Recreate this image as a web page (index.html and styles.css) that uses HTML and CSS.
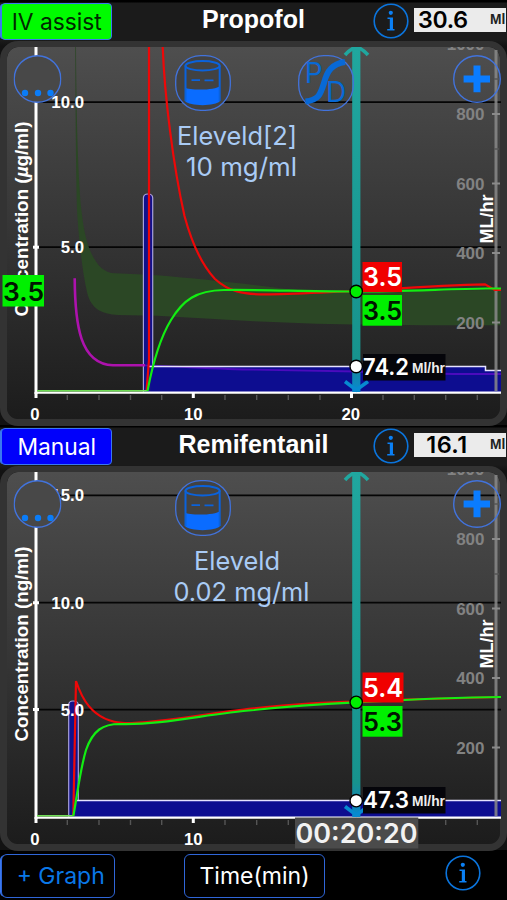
FILE: index.html
```html
<!DOCTYPE html>
<html lang="en">
<head>
    <meta charset="UTF-8">
    <meta name="viewport" content="width=device-width, initial-scale=1.0">
    <title>Infusion Graphs</title>
    <link rel="stylesheet" href="styles.css">
</head>
<body>
    <!-- shared icons and axes -->
    <svg class="defs" width="0" height="0">
        <defs>
            <linearGradient id="cursorFill" x1="0" y1="47" x2="0" y2="392" gradientUnits="userSpaceOnUse">
                <stop offset="0" stop-color="#20a79f"/>
                <stop offset="0.9" stop-color="#17938d"/>
                <stop offset="0.95" stop-color="#1287ac"/>
                <stop offset="1" stop-color="#078ad0"/>
            </linearGradient>
            <clipPath id="plotClip"><rect x="0" y="47" width="501" height="380"/></clipPath>
            <symbol id="info" viewBox="0 0 36 36">
                <circle cx="18" cy="18" r="16.8" fill="none" stroke="#0b74dc" stroke-width="1.6"/>
                <circle cx="17.8" cy="9.8" r="2.1" fill="#0b80f5"/>
                <path d="M14.5 15.2H19.2V26.3M14.2 26.8H21.5" fill="none" stroke="#0b80f5" stroke-width="1.5"/>
                <path d="M18.2 15V27" stroke="#0b80f5" stroke-width="2.8"/>
            </symbol>
            <symbol id="dots" viewBox="0 0 48 48">
                <circle cx="24" cy="24" r="23.3" fill="#484848" stroke="#4273dc" stroke-width="1.4"/>
                <g fill="#0a7cf8"><circle cx="11.5" cy="38" r="3.2"/><circle cx="24.5" cy="38" r="3.2"/><circle cx="37" cy="38" r="3.2"/></g>
            </symbol>
            <symbol id="plus" viewBox="0 0 48 48">
                <circle cx="24" cy="24" r="23.3" fill="none" stroke="#4273dc" stroke-width="1.4"/>
                <path d="M24 10.5V37.3M10.6 24H37" stroke="#0a7cff" stroke-width="7"/>
            </symbol>
            <symbol id="vial" viewBox="0 0 56 56">
                <rect x=".7" y=".7" width="54.6" height="54.6" rx="25" fill="#424242" stroke="#4273dc" stroke-width="1.3"/>
                <path d="M10 32.5C14 35.5 41 35.5 45 31V46C41 51.5 14 51.5 10 46Z" fill="#0a6cff"/>
                <path d="M10.5 10.5V46M44.7 10.5V46" stroke="#0a62dc" stroke-width="2"/>
                <ellipse cx="27.6" cy="10.8" rx="17.1" ry="4.7" fill="none" stroke="#0a62dc" stroke-width="2"/>
                <path d="M16.5 25.2H25M29.5 25.4H38.5" stroke="#0a62dc" stroke-width="1.8"/>
            </symbol>
            <symbol id="pd" viewBox="0 0 56 56">
                <rect x=".7" y=".7" width="54.6" height="54.6" rx="25" fill="none" stroke="#4273dc" stroke-width="1.3"/>
                <path d="M7.5 46.5C21 45 22.5 39 26 28C29 16 34 9 47 7" fill="none" stroke="#0869d6" stroke-width="6"/>
                <text x="6.7" y="27.8" class="pd-letter">P</text>
                <text x="28" y="47.2" class="pd-letter">D</text>
            </symbol>
            <g id="axes">
                <g class="tick-minor">
                    <path d="M67.3 395V400M99 395V400M130.5 395V400M161.7 395V400M225 395V400M256.7 395V400M288.3 395V400M320 395V400M383 395V400M414.3 395V400M445.7 395V400M477.3 395V400"/>
                </g>
                <path class="axis" d="M36 47V394"/>
                <path class="x-axis" d="M35 392.7H501"/>
                <path class="axis" d="M36 392V398M193.3 392V398M351.5 392V398"/>
                <g class="label" text-anchor="middle">
                    <text x="34.8" y="420">0</text>
                    <text x="193.3" y="420">10</text>
                    <text x="350.8" y="420">20</text>
                </g>
            </g>
            <g id="rateAxis">
                <path d="M496 50V391" stroke="#8a8a8a" stroke-opacity=".85" stroke-width="3"/>
                <path d="M492 114H500M492 183.5H500M492 253H500M492 322.5H500" stroke="#8a8a8a" stroke-width="2"/>
                <path d="M494 79H499M494 149H499" stroke="#555" stroke-width="1.5"/>
                <g class="rate-label" text-anchor="end">
                    <text x="484.5" y="50">1000</text>
                    <text x="484.5" y="120">800</text>
                    <text x="484.5" y="189.5">600</text>
                    <text x="484.5" y="259">400</text>
                    <text x="484.5" y="328.5">200</text>
                </g>
                <text class="axis-title" transform="translate(492.5 243.5) rotate(-90)" textLength="49" lengthAdjust="spacingAndGlyphs">ML/hr</text>
            </g>
            <g id="cursor">
                <path d="M356.3 47V392" stroke="url(#cursorFill)" stroke-width="8.2"/>
                <path d="M345 55C349 50.5 353 48 356.3 47C360 48 364 50.5 368 55" fill="none" stroke="#20a79f" stroke-width="3.6"/>
                <path d="M345 381.5L356.3 390L368 381.5" fill="none" stroke="#078ad0" stroke-width="3.6"/>
            </g>
        </defs>
    </svg>

    <section class="drug">
        <header class="drug-header">
            <button class="mode mode-assist">IV assist</button>
            <h2>Propofol</h2>
            <div class="rate">
                <svg class="info"><use href="#info"/></svg>
                <div class="rate-box"><b>30.6</b><span>Ml</span></div>
            </div>
        </header>
        <div class="graph">
            <svg class="plot" viewBox="0 41 507 385">
                <g clip-path="url(#plotClip)">
                    <path class="grid" d="M37 102.2H501M37 247.2H501"/>
                    <path class="band" d="M76 47C76.3 110 78 185 82 215C86 250 97 273 115 273.3C130 274 145 274.5 157 275.3C200 279 250 284 286 289L356 291L501 290V325.3C400 325.5 330 325 254 321.3L157 315.7L118 315C103 314 91 310 87 292C82 270 79 240 77.3 215C76 180 75.5 110 75.3 47Z"/>
                    <path class="bolus" d="M143.4 392V198Q143.4 194 148 194Q152.7 194 152.7 198V392"/>
                    <path class="infusion" d="M151 366.5H485.5V370.5H501V392H151Z"/>
                    <path class="magenta" d="M74.7 278.3C75 325 80 364 113 365.3H145"/>
                    <path class="magenta faded" d="M145 365.3C180 366.5 220 369 254 369.7L356 371.5L453 374H501"/>
                    <path class="infusion-top" d="M149 366.4H485.5V370.6H501"/>
                    <use href="#axes"/>
                    <use href="#rateAxis"/>
                    <text class="axis-title" transform="translate(28 316.5) rotate(-90)" textLength="195" lengthAdjust="spacingAndGlyphs">Concentration (<tspan font-style="italic">µ</tspan>g/ml)</text>
                    <path class="axis" d="M33 247.2H39"/>
                    <path class="red" d="M146.5 391L149 360V47M162.7 47C164.5 95 173 165 184.5 216C191 240 200 263 215 279C228 291 242 295 270 294.3C300 294 330 292 356 291C390 289 440 285 485 284.3L494.7 290H501"/>
                    <path class="green flat" d="M37 390.8H147.5"/>
                    <path class="green" d="M147.5 391C153 362 160 338 171 320C183 300 196 290.5 224 290C264 289.5 310 291.8 356 291.5C400 291.3 450 289 486 288.5H501"/>
                    <use href="#cursor"/>
                </g>
                <!-- menu circle hides the axis behind it, labels stay on top -->
                <use href="#dots" x="13.5" y="55" width="48" height="48"/>
                <g class="label" text-anchor="end">
                    <text x="84" y="108">10.0</text>
                    <text x="84" y="253">5.0</text>
                </g>
                <g class="drug-text">
                    <text x="177" y="144.7" textLength="120" lengthAdjust="spacingAndGlyphs">Eleveld[2]</text>
                    <text x="186" y="176" textLength="111" lengthAdjust="spacingAndGlyphs">10 mg/ml</text>
                </g>
                <rect x="2.5" y="275" width="41.5" height="31.5" fill="#00f000"/>
                <text class="value" x="3" y="300.8" textLength="41" lengthAdjust="spacingAndGlyphs">3.5</text>
                <rect x="362.5" y="262" width="39.5" height="30" fill="#f00000"/>
                <text class="value light" x="363" y="285.7" textLength="39" lengthAdjust="spacingAndGlyphs">3.5</text>
                <rect x="362.5" y="295" width="39.5" height="30.7" fill="#00f000"/>
                <text class="value" x="363" y="319.7" textLength="39" lengthAdjust="spacingAndGlyphs">3.5</text>
                <rect x="363" y="354" width="82.5" height="26.5" fill="#05050a"/>
                <text class="flow" x="363" y="374.8" textLength="46" lengthAdjust="spacingAndGlyphs">74.2</text>
                <text class="unit" x="412" y="372.5" textLength="33" lengthAdjust="spacingAndGlyphs">Ml/hr</text>
                <circle cx="356.2" cy="291.5" r="6.2" fill="#00f000" stroke="#000" stroke-width="1.4"/>
                <circle cx="356.2" cy="366.5" r="6.2" fill="#fff" stroke="#000" stroke-width="1.4"/>
            </svg>
            <svg class="tool tool-vial"><use href="#vial"/></svg>
            <svg class="tool tool-pd"><use href="#pd"/></svg>
            <svg class="tool tool-plus"><use href="#plus"/></svg>
        </div>
    </section>

    <section class="drug">
        <header class="drug-header">
            <button class="mode mode-manual">Manual</button>
            <h2>Remifentanil</h2>
            <div class="rate">
                <svg class="info"><use href="#info"/></svg>
                <div class="rate-box"><b class="narrow">16.1</b><span>Ml</span></div>
            </div>
        </header>
        <div class="graph">
            <svg class="plot" viewBox="0 41 507 385">
                <g clip-path="url(#plotClip)">
                    <path class="grid" d="M37 70.3H501M37 177.7H501M37 284.6H501"/>
                    <path class="bolus" d="M68.7 392V280Q68.7 276 73 276Q78.3 276 78.3 280V392"/>
                    <path class="infusion" d="M77 375.5H501V392H77Z"/>
                    <path class="infusion-top" d="M76 375.5H501"/>
                    <use href="#axes"/>
                    <use href="#rateAxis"/>
                    <text class="axis-title" transform="translate(28 316.5) rotate(-90)" textLength="195" lengthAdjust="spacingAndGlyphs">Concentration (ng/ml)</text>
                    <path class="axis" d="M33 177.7H39M33 284.6H39"/>
                    <path class="red" d="M73.3 391L76 256C80 268 90 297 125 298C165 298 205 288 254 283.3C290 279.5 325 277 356 276.5L403 274.7L501 272"/>
                    <path class="green flat" d="M37 390.8H73.3"/>
                    <path class="green" d="M73.3 391C77 372 80 345 86 325C93 305 103 299 120 299C165 300 205 289 254 285C290 281 320 279 356 277.3C400 275 450 272.5 501 272"/>
                    <g class="label" text-anchor="end">
                        <text x="84" y="76.3">15.0</text>
                        <text x="84" y="183.5">10.0</text>
                        <text x="84" y="290.5">5.0</text>
                    </g>
                    <use href="#cursor"/>
                </g>
                <use href="#dots" x="13.5" y="55" width="48" height="48"/>
                <g class="drug-text">
                    <text x="194" y="145.2" textLength="86" lengthAdjust="spacingAndGlyphs">Eleveld</text>
                    <text x="173.5" y="176" textLength="136" lengthAdjust="spacingAndGlyphs">0.02 mg/ml</text>
                </g>
                <rect x="362.5" y="247.5" width="41" height="30" fill="#f00000"/>
                <text class="value light" x="363" y="271.7" textLength="40" lengthAdjust="spacingAndGlyphs">5.4</text>
                <rect x="362.5" y="281" width="40" height="30.7" fill="#00f000"/>
                <text class="value" x="363" y="305.5" textLength="39" lengthAdjust="spacingAndGlyphs">5.3</text>
                <rect x="363" y="362" width="82.5" height="26.5" fill="#05050a"/>
                <text class="flow" x="363" y="382.5" textLength="46" lengthAdjust="spacingAndGlyphs">47.3</text>
                <text class="unit" x="412" y="380.5" textLength="33" lengthAdjust="spacingAndGlyphs">Ml/hr</text>
                <circle cx="356.2" cy="277.3" r="6.2" fill="#00f000" stroke="#000" stroke-width="1.4"/>
                <circle cx="356.2" cy="375.7" r="6.2" fill="#fff" stroke="#000" stroke-width="1.4"/>
                <rect x="295" y="392.5" width="123.3" height="31" fill="#4b4b4b"/>
                <text class="clock" x="295.5" y="418.3" textLength="122" lengthAdjust="spacingAndGlyphs">00:20:20</text>
            </svg>
            <svg class="tool tool-vial"><use href="#vial"/></svg>
            <svg class="tool tool-plus"><use href="#plus"/></svg>
        </div>
    </section>

    <footer class="bottom-bar">
        <button class="bar-btn add-graph">+ Graph</button>
        <button class="bar-btn time-unit">Time(min)</button>
        <svg class="info"><use href="#info"/></svg>
    </footer>
</body>
</html>
```
FILE: styles.css
```css
* {
    box-sizing: border-box;
}
body {
    margin: 0;
    width: 507px;
    height: 900px;
    overflow: hidden;
    background: #000;
    color: #fff;
    font-family: Inter, "Liberation Sans", sans-serif;
}
button {
    font-family: inherit;
    padding: 0;
    white-space: nowrap;
}
.defs {
    display: block;
    position: absolute;
}
.drug {
    height: 425px;
    background: linear-gradient(#000 2px, #1b1b1b 3px, #1b1b1b 40px, #121212 46px);
}
.drug-header {
    display: grid;
    grid-template-columns: 133px 241px 133px;
    height: 41px;
}
.mode {
    width: 110.5px;
    height: 36.5px;
    margin: 3.3px 0 0 1px;
    border: 1.5px solid #3a78f0;
    border-radius: 4px;
    font-size: 22.8px;
    line-height: 33px;
    box-shadow: -2px 0 0 -1px #3a78f0;
}
.mode-assist {
    background: #00fb00;
    color: #002a00;
    padding-left: 1px;
}
.mode-manual {
    background: #0000fb;
    color: #fff;
    padding-left: 1px;
}
h2 {
    margin: 0;
    text-align: center;
    font: bold 25px/39px "Liberation Sans", Arial, sans-serif;
}
.rate {
    display: flex;
    gap: 4.7px;
}
.info {
    flex: none;
    display: block;
    width: 36px;
    height: 36px;
}
.rate .info {
    margin: 2.5px 0 0 -.7px;
}
.rate-box {
    display: flex;
    justify-content: space-between;
    width: 91.5px;
    height: 24px;
    margin-top: 8px;
    background: #ebebeb;
    color: #000;
}
.rate-box b {
    width: 53.5px;
    text-align: right;
    font-size: 23.5px;
    font-weight: 600;
    font-variant-numeric: tabular-nums;
    letter-spacing: -.6px;
    line-height: 24px;
}
.rate-box .narrow {
    font-variant-numeric: normal;
    letter-spacing: .4px;
}
.rate-box span {
    width: 15.5px;
    font: bold 13.8px/24px "Liberation Sans", Arial, sans-serif;
    color: #222;
}
.graph {
    position: relative;
    height: 385px;
    border: 7px solid #333;
    border-top-width: 6px;
    border-radius: 18px;
    background: linear-gradient(#4e4e4e, #1c1c1c) padding-box;
}
.plot {
    display: block;
    width: 507px;
    height: 385px;
    margin: -6px 0 0 -7px;
}
.tool {
    position: absolute;
    top: 8px;
    width: 48px;
    height: 48px;
}
.tool-plus {
    left: 445.5px;
}
.tool-vial,
.tool-pd {
    width: 56px;
    height: 56px;
}
.tool-vial {
    left: 167.5px;
}
.tool-pd {
    left: 291px;
}
.pd-letter {
    font-size: 28px;
    fill: #0869d6;
}

/* graph lines */
.grid { stroke: #050505; stroke-width: 1.7; }
.axis { fill: none; stroke: #fff; stroke-width: 3; }
.x-axis { stroke: #fff; stroke-width: 2.2; }
.tick-minor { stroke: #555; stroke-width: 1.4; }
.band { fill: #2b4725; }
.bolus { fill: #11118c; stroke: #a8a0dc; stroke-width: 1.2; }
.infusion { fill: #0d0d90; }
.infusion-top { fill: none; stroke: #e6e2ff; stroke-width: 1.5; }
.red, .green, .magenta { fill: none; stroke-width: 2.2; }
.red { stroke: #ee0808; }
.green { stroke: #12ee12; }
.flat { stroke: #6fdc55; stroke-width: 1.4; }
.magenta { stroke: #ad12ad; stroke-width: 2.6; }
.faded { stroke: #4b0bbd; stroke-width: 1.8; }

/* graph text */
.label, .rate-label, .axis-title {
    font-family: "Liberation Sans", Arial, sans-serif;
    font-weight: bold;
}
.label { font-size: 16.8px; fill: #fff; }
.rate-label { font-size: 17px; fill: #828282; }
.axis-title { font-size: 18.5px; fill: #fff; }
.drug-text { font-size: 25.5px; fill: #a9cbf5; }
.value { font-size: 25.5px; font-weight: 600; fill: #001500; }
.light { fill: #fff; }
.flow { font-size: 22.8px; font-weight: 600; fill: #fff; }
.unit { font: bold 14px "Liberation Sans", Arial, sans-serif; fill: #eee; }
.clock { font-size: 27px; font-weight: 600; fill: #f2f2f2; }

.bottom-bar {
    display: flex;
    height: 50px;
    background: #000;
}
.bar-btn {
    height: 43.5px;
    margin-top: 4px;
    background: #000;
    border: 1.5px solid #2f66d8;
    border-radius: 6px;
    font-size: 23px;
}
.add-graph {
    width: 113.5px;
    margin-left: 1px;
    padding-left: 6px;
    color: #0a78e8;
    box-shadow: -2px 0 0 -1px #3a78f0;
}
.time-unit {
    width: 141px;
    margin-left: 69.5px;
    color: #fff;
}
.bottom-bar .info {
    margin: 5px 0 0 119.5px;
}
```
